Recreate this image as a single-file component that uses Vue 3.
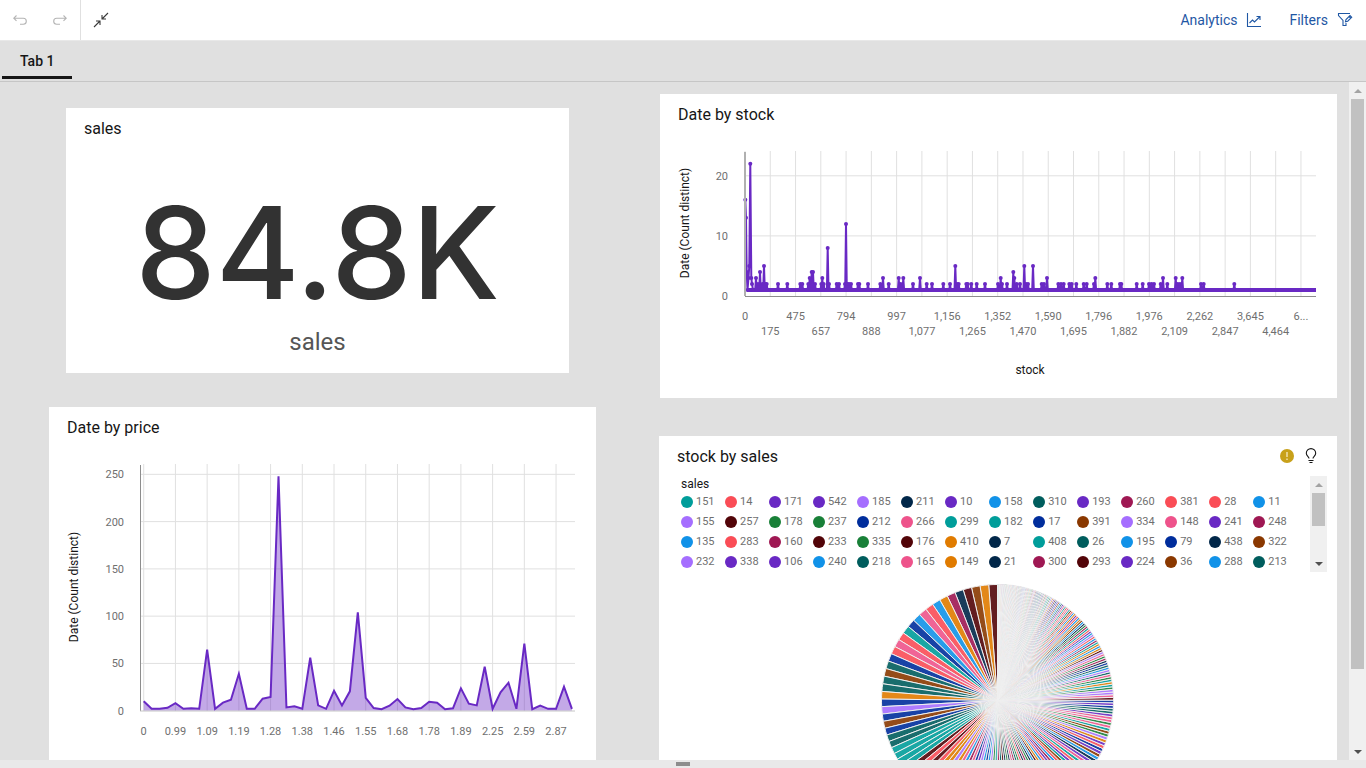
<script setup>
import { ref } from 'vue'

const activeTab = ref('Tab 1')

const palette = {
  t: '#009d9a', r: '#fa4d56', v: '#6929c4', l: '#a56eff', n: '#012749', b: '#1192e8',
  d: '#005d5d', m: '#9f1853', w: '#520408', g: '#198038', i: '#002d9c', p: '#ee538b',
  o: '#e07b00', c: '#8a3800',
}

/* Date by stock */
const STOCK_LEFT = 85
const STOCK_STEP = 25.27
const stockLabels = ['0', '175', '475', '657', '794', '888', '997', '1,077', '1,156', '1,265', '1,352', '1,470', '1,590', '1,695', '1,796', '1,882', '1,976', '2,109', '2,262', '2,847', '3,645', '4,464', '6...']
const stockTicks = stockLabels.map((label, i) => ({
  label,
  x: STOCK_LEFT + i * STOCK_STEP,
  y: i % 2 ? 203 : 188,
}))
const stockY = (v) => 164 - v * 6.01
const stockPeaks = [
  [96, 3], [98, 2], [100, 4], [102.5, 2], [104, 5], [105.3, 2], [106.7, 2],
  [118, 2], [127.3, 2], [140.3, 2], [142.3, 2], [148.3, 2], [149.7, 3], [151.7, 4], [153, 4], [155, 2],
  [161.3, 2], [162.3, 3], [163.7, 2], [167.7, 8], [169, 2], [176.7, 2], [179, 2], [185, 2], [186, 12], [187.3, 2],
  [189, 2], [191, 2], [198, 2], [199.3, 2], [208, 2], [220.3, 2], [223, 3], [228.7, 2], [238.7, 3], [240.7, 2],
  [243.3, 3], [253, 2], [260, 3], [266.7, 2], [272, 2], [283.3, 2], [290, 2], [295.3, 5], [297, 2], [298.7, 2],
  [306.3, 2], [307.7, 2], [311.3, 2], [316.7, 2], [325, 2], [338, 2], [340.7, 3], [342, 2], [347, 2], [353.3, 4], [354.3, 3],
  [356.7, 2], [360, 2], [364.3, 5], [366, 2], [368, 2], [373, 5], [381.7, 2], [384, 2], [387, 3], [398.3, 2],
  [401, 2], [403.7, 2], [409.3, 2], [411.7, 2], [416.3, 2], [423.7, 2], [426.7, 2], [434, 2], [435.3, 3],
  [447.3, 2], [451.3, 2], [460, 2], [461.3, 2], [476.7, 2], [482.7, 2], [489, 2], [491.5, 2], [494, 2], [500.7, 2],
  [503, 3], [507.3, 2], [515.7, 3], [517.7, 2], [520, 2], [522.3, 3], [541, 2], [543.7, 2], [574.3, 2],
]
const stockStart = [[85.3, 16], [86, 13], [86.7, 4], [87.5, 1], [88.5, 3], [89.3, 5], [90.3, 22], [91.3, 3], [92, 2], [93, 1]]
const stockLine = [
  ...stockStart,
  ...stockPeaks.flatMap(([x, v]) => [[x - 0.8, 1], [x, v], [x + 0.8, 1]]),
  [656, 1],
].map(([x, v]) => `${x},${stockY(v)}`).join(' ')
const stockDots = [...stockStart, ...stockPeaks].map(([x, v]) => ({ x, y: stockY(v) }))

/* Date by price */
const priceLabels = ['0', '0.99', '1.09', '1.19', '1.28', '1.38', '1.46', '1.55', '1.68', '1.78', '1.89', '2.25', '2.59', '2.87']
const priceX = (i) => 94.7 + i * 7.93
const priceY = (v) => 265.7 - v * 0.9455
const priceTicks = priceLabels.map((label, i) => ({ label, x: priceX(i * 4) }))
const priceValues = [
  10, 2, 2, 3, 8, 2, 2.5, 2, 64.5, 2, 8.5, 11.6, 39, 2, 2, 12.7, 14.5, 248, 3.5, 4.6, 2, 56, 5.6, 2, 21, 5.6,
  20.5, 104, 13.7, 2.8, 1.5, 5.3, 12.3, 3.5, 1.5, 2.8, 9.5, 8.5, 1.5, 2.5, 23.6, 7.4, 5.6, 46.5, 2, 19.4, 29.6,
  2, 71, 1.5, 5.3, 2, 2, 25.4, 2,
]
const pricePoints = priceValues.map((v, i) => `${priceX(i)},${priceY(v)}`).join(' ')
const priceArea = `${priceX(0)},${priceY(0)} ${pricePoints} ${priceX(54)},${priceY(0)}`

/* stock by sales */
const legend = [
  ['151 14 171 542 185 211 10 158 310 193 260 381 28 11', 'trvvlnvbdvmrrb'],
  ['155 257 178 237 212 266 299 182 17 391 334 148 241 248', 'lwggiptticlpvm'],
  ['135 283 160 233 335 176 410 7 408 26 195 79 438 322', 'brmwgwontdbinc'],
  ['232 338 106 240 218 165 149 21 300 293 224 36 288 213', 'lvvbdponmwvcbd'],
].flatMap(([names, keys]) => names.split(' ').map((name, i) => ({ name, color: palette[keys[i]] })))

const leading = 'wocwnmobrpbitrpridcddoiliciddttttwrwroolopbmpivlbiblgtmdwngnpmdg'
const rest = 'tpvdblomgricwlbptnvogrdpmibtclvgwrotbdnpv'
const sizes = [[0, 0.3], [25, 0.62], [45, 0.95], [90, 1.35], [180, 2.1], [240, 3.1], [270, 3.75], [360, 4.35]]
function sizeAt(angle) {
  const k = Math.max(1, sizes.findIndex(([a]) => a >= angle))
  const [a0, s0] = sizes[k - 1]
  const [a1, s1] = sizes[k]
  return s0 + ((angle - a0) / (a1 - a0)) * (s1 - s0)
}
const CX = 338.5
const CY = 128.5
const R = 116
function rim(angle) {
  const rad = (angle * Math.PI) / 180
  return `${(CX + R * Math.sin(rad)).toFixed(2)} ${(CY - R * Math.cos(rad)).toFixed(2)}`
}
const slices = []
for (let end = 360, n = 0; end > 0.2; n++) {
  const start = Math.max(0, end - sizeAt(end))
  const key = leading[n] ?? rest[(n * 7 + Math.floor(n / 5)) % rest.length]
  slices.push({ d: `M${CX} ${CY}L${rim(start)}A${R} ${R} 0 0 1 ${rim(end)}Z`, color: palette[key] })
  end = start
}
</script>

<template>
  <div class="app">
    <header class="toolbar">
      <div class="history">
        <button type="button" aria-label="Undo" disabled>
          <svg width="16" height="16" viewBox="0 0 16 16"><path d="M4.5 3.5 1.8 6.2 4.5 8.9M2 6.2h9.3a3 3 0 0 1 0 6H8" /></svg>
        </button>
        <button type="button" aria-label="Redo" disabled>
          <svg width="16" height="16" viewBox="0 0 16 16"><path d="M11.5 3.5l2.7 2.7-2.7 2.7M14 6.2H4.7a3 3 0 0 0 0 6H8" /></svg>
        </button>
      </div>
      <button type="button" class="collapse" aria-label="Exit full screen">
        <svg width="16" height="16" viewBox="0 0 16 16"><path d="M15 1 9 7M9 3v4h4M1 15l6-6M3 9h4v4" /></svg>
      </button>
      <div class="actions">
        <button type="button">
          Analytics
          <svg width="16" height="16" viewBox="0 0 16 16"><path d="M1.5 1v13.5H15" /><path d="M3.5 11 6.5 8l2 2 5.5-5.5M10.5 4.5H14V8" /></svg>
        </button>
        <button type="button">
          Filters
          <svg width="16" height="16" viewBox="0 0 16 16"><path d="M13 1.5H1.5v2L6 8.5v5h3v-2.5" /><path d="M8.5 9.7 9 7.5l4-4 1.7 1.7-4 4zM12 4.5l1.7 1.7" /></svg>
        </button>
      </div>
    </header>

    <nav class="tabs" role="tablist">
      <button type="button" role="tab" :aria-selected="activeTab === 'Tab 1'">Tab 1</button>
    </nav>

    <div class="stage">
      <main class="canvas">
        <div class="column left">
          <section class="card kpi">
            <h2>sales</h2>
            <div class="value">84.8K</div>
            <div class="caption">sales</div>
          </section>

          <section class="card">
            <h2>Date by price</h2>
            <svg class="chart" viewBox="0 0 547 340" role="img" aria-label="Date by price">
              <g class="grid">
                <line v-for="t in priceTicks" :key="t.label" :x1="t.x" :x2="t.x" y1="19" y2="266" />
                <line v-for="v in [50, 100, 150, 200, 250]" :key="v" x1="91" x2="526" :y1="priceY(v)" :y2="priceY(v)" />
              </g>
              <line class="axis" x1="91.5" x2="91.5" y1="20" y2="266" />
              <polygon class="area" :points="priceArea" />
              <line class="floor" x1="91" x2="526" y1="266" y2="266" />
              <polyline class="series" :points="pricePoints" />
              <text v-for="v in [0, 50, 100, 150, 200, 250]" :key="v" x="75" :y="priceY(v) + 4" text-anchor="end">{{ v }}</text>
              <text v-for="t in priceTicks" :key="t.label" :x="t.x" y="290" text-anchor="middle">{{ t.label }}</text>
              <text class="title" text-anchor="middle" transform="translate(29 142) rotate(-90)">Date (Count distinct)</text>
            </svg>
          </section>
        </div>

        <div class="column right">
          <section class="card stock">
            <h2>Date by stock</h2>
            <svg class="chart" viewBox="0 0 677 266" role="img" aria-label="Date by stock">
              <g class="grid">
                <line v-for="t in stockTicks" :key="t.label" :x1="t.x" :x2="t.x" y1="19" y2="164" />
                <line v-for="v in [10, 20]" :key="v" x1="85" x2="656" :y1="stockY(v)" :y2="stockY(v)" />
              </g>
              <line class="axis" x1="85" x2="656" y1="164.5" y2="164.5" />
              <polyline class="series" :points="stockLine" />
              <line class="base" x1="87" x2="656" :y1="stockY(1)" :y2="stockY(1)" />
              <circle v-for="(p, i) in stockDots" :key="i" class="dot" :cx="p.x" :cy="p.y" r="2" />
              <line class="axis faint" x1="85" x2="85" y1="20" y2="164" />
              <text v-for="v in [0, 10, 20]" :key="v" x="68" :y="stockY(v) + 4" text-anchor="end">{{ v }}</text>
              <text v-for="t in stockTicks" :key="t.label" :x="t.x" :y="t.y" text-anchor="middle">{{ t.label }}</text>
              <text class="title" x="370" y="242" text-anchor="middle">stock</text>
              <text class="title" text-anchor="middle" transform="translate(29 91) rotate(-90)">Date (Count distinct)</text>
            </svg>
          </section>

          <section class="card">
            <div class="head">
              <h2>stock by sales</h2>
              <button type="button" aria-label="Warning">
                <svg width="14" height="14" viewBox="0 0 14 14"><circle cx="7" cy="7" r="7" fill="#c8a11a" /><path d="M7 3v5M7 9.5v1.6" stroke="#f3e6b8" stroke-width="1.4" /></svg>
              </button>
              <button type="button" aria-label="Insights">
                <svg width="12" height="16" viewBox="0 0 12 16"><path d="M4 10.5C4 8.5 1.3 8 1.3 5.3a4.7 4.7 0 0 1 9.4 0C10.7 8 8 8.5 8 10.5M3.5 12.5h5M4.5 14.5h3" fill="none" stroke="#161616" stroke-width="1.1" /></svg>
              </button>
            </div>
            <div class="legend">
              <div class="legend-body">
                <h3>sales</h3>
                <ul>
                  <li v-for="e in legend" :key="e.name">
                    <span class="swatch" :style="{ background: e.color }"></span>{{ e.name }}
                  </li>
                </ul>
              </div>
              <div class="scrollbar small">
                <span class="arrow up"></span>
                <span class="thumb"></span>
                <span class="arrow down"></span>
              </div>
            </div>
            <svg class="chart" viewBox="0 0 678 260" role="img" aria-label="stock by sales">
              <path v-for="(s, i) in slices" :key="i" class="slice" :d="s.d" :fill="s.color" />
            </svg>
          </section>
        </div>
      </main>
      <div class="scrollbar">
        <span class="arrow up"></span>
        <span class="thumb"></span>
        <span class="arrow down"></span>
      </div>
    </div>

    <footer class="handle"><span></span></footer>
  </div>
</template>

<style>
body {
  margin: 0;
}
</style>

<style scoped>
.app {
  display: flex;
  flex-direction: column;
  height: 100vh;
  overflow: hidden;
  background: #e0e0e0;
  color: #161616;
  font-family: Roboto, "Liberation Sans", sans-serif;
  font-size: 14px;
}
button {
  display: flex;
  align-items: center;
  padding: 0;
  border: 0;
  background: none;
  font: inherit;
  color: inherit;
}
h2, h3, ul {
  margin: 0;
  padding: 0;
  font-weight: 400;
}
.toolbar {
  display: flex;
  flex: none;
  height: 40px;
  background: #fff;
  border-bottom: 1px solid #e8e8e8;
}
.toolbar svg {
  fill: none;
  stroke: currentColor;
  stroke-width: 1.1;
}
.history {
  display: flex;
  gap: 24px;
  padding: 0 12px;
  border-right: 1px solid #e0e0e0;
  color: #b4b4b4;
}
.collapse {
  padding: 0 12px;
  color: #393939;
}
.actions {
  display: flex;
  gap: 27px;
  margin-left: auto;
  padding-right: 13px;
  color: #1f57a4;
}
.actions button {
  gap: 9px;
}
.tabs {
  display: flex;
  flex: none;
  height: 40px;
  padding-left: 2px;
  border-bottom: 1px solid #c6c6c6;
}
.tabs button {
  height: 38px;
  box-sizing: border-box;
  padding: 5px 18px 0;
  border-bottom: 3px solid #161616;
  font-weight: 500;
}
.stage {
  display: flex;
  flex: 1;
  min-height: 0;
}
.canvas {
  display: grid;
  flex: 1;
  grid-template-columns: minmax(0, 547fr) minmax(0, 678fr);
  gap: 63px;
  padding: 12px 12px 0 49px;
  overflow: hidden;
}
.column {
  display: flex;
  flex-direction: column;
}
.left {
  gap: 34px;
  padding-top: 14px;
}
.right {
  gap: 38px;
}
.card {
  background: #fff;
}
.card h2 {
  padding: 11px 18px 7px;
  font-size: 16px;
  line-height: 20px;
}
.chart {
  display: block;
  width: 100%;
}
.stock {
  margin-left: 1px;
}
.kpi {
  margin: 0 27px 0 17px;
  padding-bottom: 14px;
  text-align: center;
}
.kpi h2 {
  text-align: left;
}
.value {
  padding-top: 35px;
  font-family: Inter, sans-serif;
  font-size: 128px;
  font-weight: 500;
  line-height: 144px;
  color: #323232;
}
.caption {
  font-size: 24px;
  line-height: 34px;
  color: #565656;
}
.grid line {
  stroke: #e0e0e0;
}
.axis {
  stroke: #8d8d8d;
}
.faint {
  stroke: #b0b0b0;
  stroke-width: 2;
}
.floor {
  stroke: #c6c6c6;
}
.area {
  fill: #6929c4;
  fill-opacity: 0.4;
}
.series {
  fill: none;
  stroke: #6929c4;
  stroke-width: 2;
}
.base {
  stroke: #6929c4;
  stroke-width: 4;
}
.dot {
  fill: #6929c4;
}
.chart text {
  font-size: 11px;
  fill: #6f6f6f;
}
.chart .title {
  font-size: 12px;
  fill: #161616;
}
.slice {
  fill-opacity: 0.9;
  stroke: #f0f0f0;
  stroke-width: 1;
}
.head {
  display: flex;
  align-items: center;
  gap: 11px;
  height: 40px;
  padding-right: 20px;
}
.head h2 {
  flex: 1;
  padding: 11px 18px 9px;
}
.legend {
  display: flex;
  height: 96px;
  padding: 0 10px 0 22px;
}
.legend-body {
  flex: 1;
}
.legend h3 {
  font-size: 12px;
  line-height: 16px;
}
.legend ul {
  display: grid;
  grid-template-columns: repeat(14, 7%);
  grid-auto-rows: 20px;
  font-size: 11px;
  line-height: 20px;
  color: #6f6f6f;
  list-style: none;
}
.legend li {
  display: flex;
  align-items: center;
  gap: 3px;
}
.swatch {
  width: 12px;
  height: 12px;
  border-radius: 50%;
}
.scrollbar {
  display: flex;
  flex: none;
  flex-direction: column;
  align-items: center;
  width: 17px;
  background: #f0f0f0;
}
.thumb {
  flex: none;
  width: 13px;
  height: 84%;
  background: #c1c1c1;
}
.small .thumb {
  height: 33px;
}
.arrow {
  display: flex;
  align-items: center;
  justify-content: center;
  height: 17px;
}
.arrow::before {
  content: "";
  border: 4px solid transparent;
}
.up::before {
  border-top-width: 0;
  border-bottom-color: #a3a3a3;
}
.down {
  margin-top: auto;
}
.down::before {
  border-bottom-width: 0;
  border-top-color: #505050;
}
.handle {
  display: flex;
  flex: none;
  justify-content: center;
  height: 8px;
  background: #e9e9e9;
}
.handle span {
  width: 14px;
  height: 4px;
  margin-top: 2px;
  background: #8d8d8d;
}
</style>
